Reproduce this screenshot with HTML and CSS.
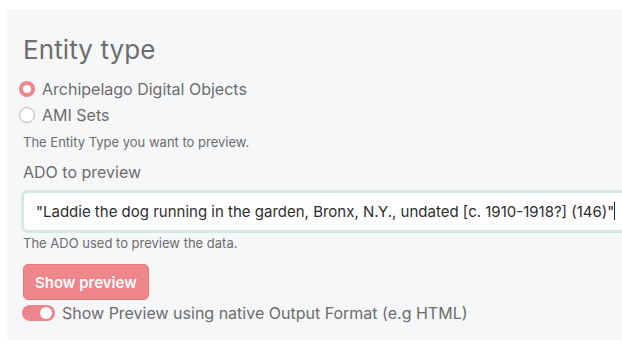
FILE: index.html
```html
<!DOCTYPE html>
<html>
<head>
	<title>ADO preview</title>
	<link rel="stylesheet" href="styles.css">
</head>
<body>

	<form class="panel">
		<div class="entity">
			<div class="legend">Entity type</div>
			<label class="radio"><span class="dot checked"></span>Archipelago Digital Objects</label>
			<label class="radio"><span class="dot"></span>AMI Sets</label>
			<div class="help">The Entity Type you want to preview.</div>
		</div>

		<div class="field">
			<label class="title">ADO to preview</label>
			<div class="input">"Laddie the dog running in the garden, Bronx, N.Y., undated [c. 1910-1918?] (146)"<span class="caret"></span></div>
			<div class="help">The ADO used to preview the data.</div>
		</div>

		<button type="button" class="btn">Show preview</button>
		<label class="switch"><span class="track"><span class="knob"></span></span>Show Preview using native Output Format (e.g HTML)</label>
	</form>

</body>
</html>
```

FILE: styles.css
```css
html, body {margin:0;padding:0;background:#fff;}
body {padding:9px 0 0 7px;font-family:"Inter","Liberation Sans",sans-serif;color:#6c6c6c;overflow:hidden;}

.panel {background:#f6f7f9;padding:26px 0 17px 16px;}

.entity .legend {font-size:26px;font-weight:400;color:#6e6e6e;line-height:30px;margin-bottom:11px;letter-spacing:0.1px;}

.radio {display:flex;align-items:center;font-size:16px;line-height:26px;margin-left:-4px;}
.dot {width:16px;height:16px;border:1px solid #b5b5b5;border-radius:50%;background:#fff;margin-right:7px;box-sizing:border-box;}
.dot.checked {border:4.5px solid #ee858d;}

.help {font-size:13px;line-height:16px;color:#6c6c6c;}
.entity .help {margin-top:6px;}

.field {margin-top:12px;}
.field .title {display:block;font-size:16px;line-height:20px;margin-bottom:8px;}
.input {background:#fff;border:3px solid #d4e9e3;border-right:0;border-radius:7px 0 0 7px;height:37px;line-height:37px;padding-left:12px;font-size:15px;color:#2d2d2d;white-space:nowrap;overflow:hidden;margin-left:-2px;}
.caret {display:inline-block;width:1px;height:18px;background:#222;vertical-align:-3px;}
.field .help {margin-top:2px;}

.btn {display:block;margin-top:13px;background:#ee868c;border:1px solid #e17a81;border-radius:5px;color:#fff;font:600 15px "Inter","Liberation Sans",sans-serif;padding:0 11px;height:36px;white-space:nowrap;}

.switch {display:flex;align-items:center;font-size:16px;line-height:20px;margin-top:3px;margin-left:-1px;}
.track {width:33px;height:16px;border-radius:8px;background:#ee858d;position:relative;margin-right:7px;}
.knob {position:absolute;right:3px;top:2px;width:12px;height:12px;border-radius:50%;background:#fff;}
```
